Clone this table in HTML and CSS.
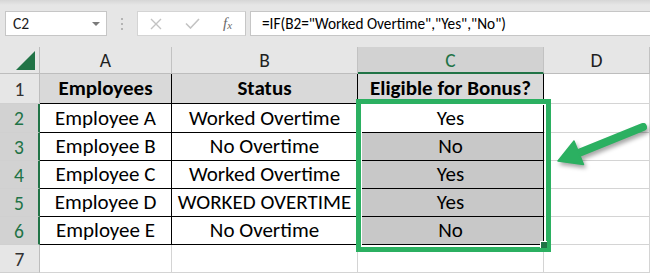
FILE: index.html
```html
<!DOCTYPE html>
<html lang="en">
<head>
<meta charset="utf-8">
<title>Eligible for Bonus</title>
<link rel="stylesheet" href="styles.css">
</head>
<body>
<div class="app">
  <div class="toolbar">
    <div class="namebox">
      <span class="ref">C2</span>
      <svg class="caret" width="8" height="4" viewBox="0 0 8 4"><path d="M0 0H8L4 4Z" fill="#7a7a7a"/></svg>
    </div>
    <div class="grip"><i></i><i></i><i></i></div>
    <div class="fxbtns">
      <svg class="btn-x" width="12" height="12" viewBox="0 0 12 12"><path d="M1 1L11 11M11 1L1 11" stroke="#c3c3c3" stroke-width="1.4" fill="none"/></svg>
      <svg class="btn-ok" width="15" height="11" viewBox="0 0 15 11"><path d="M1 5.5L5.5 10L14 1" stroke="#c3c3c3" stroke-width="1.6" fill="none"/></svg>
      <span class="fx">f<sub>x</sub></span>
    </div>
    <div class="formula">=IF(B2="Worked Overtime","Yes","No")</div>
  </div>

  <div class="sheet">
    <div class="corner"><svg width="19" height="19" viewBox="0 0 19 19"><path d="M19 0V19H0Z" fill="#217346"/></svg></div>
    <div class="colhead">A</div>
    <div class="colhead">B</div>
    <div class="colhead sel">C</div>
    <div class="colhead">D</div>

    <div class="rowhead">1</div>
    <div class="cell tbl hdr">Employees</div>
    <div class="cell tbl hdr">Status</div>
    <div class="cell tbl hdr">Eligible for Bonus?</div>
    <div class="cell"></div>

    <div class="rowhead sel">2</div>
    <div class="cell tbl">Employee A</div>
    <div class="cell tbl">Worked Overtime</div>
    <div class="cell tbl active">Yes</div>
    <div class="cell"></div>

    <div class="rowhead sel">3</div>
    <div class="cell tbl">Employee B</div>
    <div class="cell tbl">No Overtime</div>
    <div class="cell tbl range">No</div>
    <div class="cell"></div>

    <div class="rowhead sel">4</div>
    <div class="cell tbl">Employee C</div>
    <div class="cell tbl">Worked Overtime</div>
    <div class="cell tbl range">Yes</div>
    <div class="cell"></div>

    <div class="rowhead sel">5</div>
    <div class="cell tbl">Employee D</div>
    <div class="cell tbl">WORKED OVERTIME</div>
    <div class="cell tbl range">Yes</div>
    <div class="cell"></div>

    <div class="rowhead sel">6</div>
    <div class="cell tbl">Employee E</div>
    <div class="cell tbl">No Overtime</div>
    <div class="cell tbl range">No</div>
    <div class="cell"></div>

    <div class="rowhead">7</div>
    <div class="cell"></div>
    <div class="cell"></div>
    <div class="cell"></div>
    <div class="cell"></div>

    <div class="fill-handle"></div>
    <div class="highlight"></div>
    <svg class="arrow" width="110" height="72" viewBox="0 0 110 72">
      <line x1="103" y1="17" x2="40" y2="42.5" stroke="#2bb061" stroke-width="8" stroke-linecap="round"/>
      <path d="M18 51L43.5 54.5L34 31Z" fill="#2bb061" stroke="#2bb061" stroke-width="1.5" stroke-linejoin="round"/>
    </svg>
  </div>
</div>
</body>
</html>
```

FILE: styles.css
```css
* { box-sizing: border-box; }

html, body {
  margin: 0;
  padding: 0;
  background: #ffffff;
}

.app {
  width: 650px;
  height: 273px;
  overflow: hidden;
  font-family: "Carlito", "Lato", "Liberation Sans", sans-serif;
}

/* formula bar */
.toolbar {
  display: flex;
  align-items: center;
  height: 47px;
  padding: 0 0 0 5px;
  background: linear-gradient(#d6d6d6 0, #e6e6e6 5px, #e6e6e6 100%);
}

.namebox {
  position: relative;
  display: flex;
  align-items: center;
  width: 102px;
  height: 25px;
  background: #fff;
  border: 1px solid #c6c6c6;
  padding-left: 7px;
  font-size: 15.5px;
  color: #1a1a1a;
}

.namebox .caret {
  margin-left: auto;
  margin-right: 6px;
}

.grip {
  display: flex;
  flex-direction: column;
  gap: 3px;
  margin: 0 14px 0 14px;
}

.grip i {
  display: block;
  width: 2px;
  height: 2px;
  background: #b4b4b4;
}

.fxbtns {
  display: flex;
  align-items: center;
  width: 109px;
  height: 25px;
  background: #fff;
  border: 1px solid #d4d4d4;
  border-right-color: #c6c6c6;
}

.btn-x { margin-left: 12px; }
.btn-ok { margin-left: 23px; }

.fx {
  margin-left: 23px;
  font-family: "Liberation Serif", serif;
  font-style: italic;
  font-size: 15px;
  color: #6a6a6a;
  line-height: 1;
}

.fx sub {
  font-size: 11px;
  vertical-align: -1px;
}

.formula {
  flex: 1;
  height: 25px;
  margin-left: 4px;
  margin-right: -2px;
  background: #fff;
  border: 1px solid #c6c6c6;
  padding-left: 11px;
  font-size: 15.3px;
  line-height: 23px;
  color: #000;
  white-space: nowrap;
}

/* worksheet grid */
.sheet {
  position: relative;
  display: grid;
  grid-template-columns: 40px 132px 186px 186px 106px;
  grid-template-rows: 27px 30px 29px 28px 28px 28px 28px 28px;
}

.corner {
  display: flex;
  align-items: flex-end;
  justify-content: flex-end;
  padding: 0 4px 3px 0;
  background: #e6e6e6;
  border-right: 1px solid #bdbdbd;
  border-bottom: 1px solid #bdbdbd;
}

.colhead {
  display: flex;
  align-items: center;
  justify-content: center;
  background: #e6e6e6;
  border-right: 1px solid #c2c2c2;
  border-bottom: 1px solid #bdbdbd;
  font-size: 19.5px;
  color: #1f1f1f;
}

.colhead.sel {
  background: #d2d2d2;
  border-bottom: 2px solid #217346;
  color: #217346;
}

.rowhead {
  display: flex;
  align-items: center;
  justify-content: center;
  background: #e6e6e6;
  border-right: 1px solid #bdbdbd;
  border-bottom: 1px solid #d0d0d0;
  font-size: 19.5px;
  color: #333;
}

.rowhead.sel {
  background: #d2d2d2;
  border-right: 2px solid #217346;
  color: #217346;
}

.cell {
  display: flex;
  align-items: center;
  justify-content: center;
  padding-bottom: 1px;
  border-right: 1px solid #d4d4d4;
  border-bottom: 1px solid #d4d4d4;
  font-size: 21px;
  color: #000;
  white-space: nowrap;
}

.cell.tbl {
  border-right-color: #000;
  border-bottom-color: #000;
}

.cell.hdr {
  background: #d9d9d9;
  font-weight: bold;
}

.cell.range {
  background: #c8c8c8;
}

.cell.active {
  background: #fff;
}

/* annotations over the sheet */
.highlight {
  position: absolute;
  left: 356px;
  top: 52px;
  width: 195px;
  height: 153px;
  border: 5px solid #2bb061;
  box-shadow: inset 0 0 0 1px #fff;
}

.fill-handle {
  position: absolute;
  left: 540px;
  top: 194px;
  width: 7px;
  height: 7px;
  background: #217346;
  border-top: 1px solid #fff;
  border-left: 1px solid #fff;
  z-index: 2;
}

.arrow {
  position: absolute;
  left: 540px;
  top: 63px;
  overflow: visible;
  filter: drop-shadow(2px 3px 2px rgba(0, 0, 0, 0.35));
}
```
